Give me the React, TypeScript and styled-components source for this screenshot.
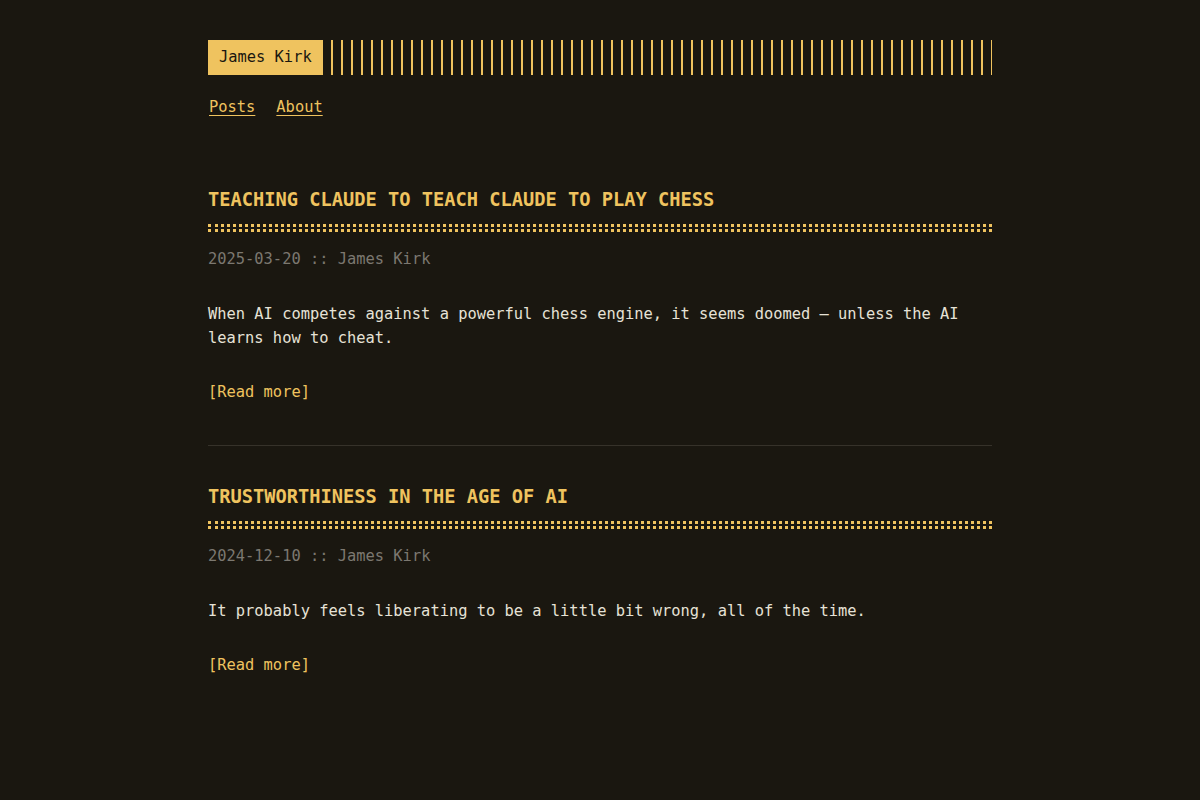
import React from 'react';
import styled, { createGlobalStyle } from 'styled-components';

const accent = '#efc35f';
const bg = '#1a1710';
const text = '#e6e2d6';
const muted = '#7c7870';

const GlobalStyle = createGlobalStyle`
  html, body {
    margin: 0;
    padding: 0;
    background: ${bg};
  }
  body {
    font-family: 'DejaVu Sans Mono', 'Liberation Mono', monospace;
    font-size: 15.4px;
    line-height: 24px;
    color: ${text};
  }
`;

const Container = styled.div`
  width: 784px;
  margin: 0 auto;
  padding: 40px 0;
`;

const Header = styled.header`
  display: flex;
  flex-direction: column;
`;

const LogoRow = styled.div`
  display: flex;
  align-items: stretch;
`;

const Logo = styled.a`
  background: ${accent};
  color: #1a1710;
  padding: 5px 11px 5px 11px;
  line-height: 25px;
  text-decoration: none;
  white-space: nowrap;
`;

const Stripes = styled.div`
  flex: 1;
  margin-left: 8px;
  background: repeating-linear-gradient(
    90deg,
    ${accent},
    ${accent} 2px,
    transparent 2px,
    transparent 10px
  );
`;

const Menu = styled.nav`
  display: flex;
  gap: 21px;
  margin-top: 20px;
  padding-left: 1px;
`;

const MenuLink = styled.a`
  color: ${accent};
  text-decoration: underline;
  text-underline-offset: 3px;
`;

const Posts = styled.main`
  margin-top: 67px;
`;

const Post = styled.article<{ $last?: boolean }>`
  padding-bottom: ${(p) => (p.$last ? '0' : '41px')};
  margin-bottom: ${(p) => (p.$last ? '0' : '37px')};
  border-bottom: ${(p) => (p.$last ? 'none' : '1px solid #36322a')};
`;

const Title = styled.h1`
  position: relative;
  margin: 0 0 15px;
  padding-bottom: 15px;
  font-size: 18.7px;
  line-height: 28px;
  font-weight: 700;
  text-transform: uppercase;
  color: ${accent};
  border-bottom: 3px dotted ${accent};

  &::after {
    content: '';
    position: absolute;
    left: 0;
    bottom: 2px;
    width: 100%;
    border-bottom: 3px dotted ${accent};
  }
`;

const Meta = styled.div`
  color: ${muted};
`;

const Excerpt = styled.p`
  margin: 31px 0 30px;
`;

const ReadMore = styled.a`
  color: ${accent};
  text-decoration: none;
`;

const posts = [
  {
    title: 'Teaching Claude to teach Claude to play chess',
    date: '2025-03-20',
    author: 'James Kirk',
    excerpt:
      'When AI competes against a powerful chess engine, it seems doomed – unless the AI learns how to cheat.',
  },
  {
    title: 'Trustworthiness in the age of AI',
    date: '2024-12-10',
    author: 'James Kirk',
    excerpt: 'It probably feels liberating to be a little bit wrong, all of the time.',
  },
];

export default function App() {
  return (
    <>
      <GlobalStyle />
      <Container>
        <Header>
          <LogoRow>
            <Logo href="#">James Kirk</Logo>
            <Stripes />
          </LogoRow>
          <Menu>
            <MenuLink href="#">Posts</MenuLink>
            <MenuLink href="#">About</MenuLink>
          </Menu>
        </Header>
        <Posts>
          {posts.map((post, i) => (
            <Post key={post.date} $last={i === posts.length - 1}>
              <Title>{post.title}</Title>
              <Meta>
                {post.date} :: {post.author}
              </Meta>
              <Excerpt>{post.excerpt}</Excerpt>
              <ReadMore href="#">[Read more]</ReadMore>
            </Post>
          ))}
        </Posts>
      </Container>
    </>
  );
}
